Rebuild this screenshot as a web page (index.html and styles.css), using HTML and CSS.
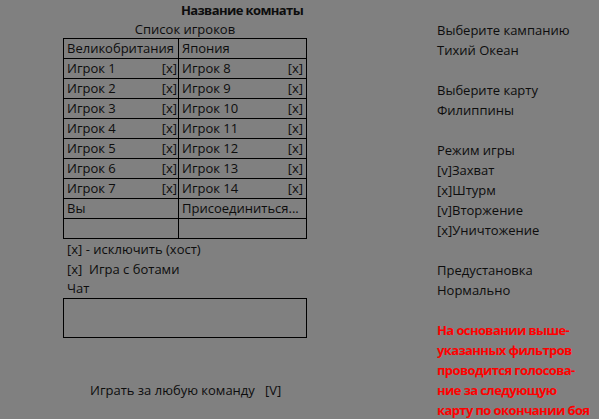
FILE: index.html
```html
<!DOCTYPE html>
<html lang="ru">
<head>
<meta charset="utf-8">
<title>Название комнаты</title>
<link rel="stylesheet" href="styles.css">
</head>
<body>
<div class="title">Название комнаты</div>
<div class="sheet">
  <div class="left">
    <div class="caption">Список игроков</div>
    <table class="players">
      <colgroup><col class="c1"><col class="c2"></colgroup>
      <tr><td>Великобритания</td><td>Япония</td></tr>
      <tr><td><span>Игрок 1</span><span>[x]</span></td><td><span>Игрок 8</span><span>[x]</span></td></tr>
      <tr><td><span>Игрок 2</span><span>[x]</span></td><td><span>Игрок 9</span><span>[x]</span></td></tr>
      <tr><td><span>Игрок 3</span><span>[x]</span></td><td><span>Игрок 10</span><span>[x]</span></td></tr>
      <tr><td><span>Игрок 4</span><span>[x]</span></td><td><span>Игрок 11</span><span>[x]</span></td></tr>
      <tr><td><span>Игрок 5</span><span>[x]</span></td><td><span>Игрок 12</span><span>[x]</span></td></tr>
      <tr><td><span>Игрок 6</span><span>[x]</span></td><td><span>Игрок 13</span><span>[x]</span></td></tr>
      <tr><td><span>Игрок 7</span><span>[x]</span></td><td><span>Игрок 14</span><span>[x]</span></td></tr>
      <tr><td>Вы</td><td>Присоединиться...</td></tr>
      <tr><td></td><td></td></tr>
    </table>
    <div class="note">[x] - исключить (хост)</div>
    <div class="note">[x]&nbsp; Игра с ботами</div>
    <div class="note chat-label">Чат</div>
    <div class="chat"></div>
    <div class="any">Играть за любую команду &nbsp; [V]</div>
  </div>
  <div class="right">
    <div class="line">Выберите кампанию</div>
    <div class="line">Тихий Океан</div>
    <div class="line"></div>
    <div class="line">Выберите карту</div>
    <div class="line">Филиппины</div>
    <div class="line"></div>
    <div class="line">Режим игры</div>
    <div class="line">[v]Захват</div>
    <div class="line">[x]Штурм</div>
    <div class="line">[v]Вторжение</div>
    <div class="line">[x]Уничтожение</div>
    <div class="line"></div>
    <div class="line">Предустановка</div>
    <div class="line">Нормально</div>
    <div class="line"></div>
    <div class="line red">На основании выше-</div>
    <div class="line red">указанных фильтров</div>
    <div class="line red">проводится голосова-</div>
    <div class="line red">ние за следующую</div>
    <div class="line red">карту по окончании боя</div>
  </div>
</div>
</body>
</html>
```
FILE: styles.css
```css
html, body {
  margin: 0;
  padding: 0;
  background: #808080;
  overflow: hidden;
}
body {
  font-family: "Open Sans", "Liberation Sans", sans-serif;
  font-size: 13px;
  color: #0d0d0d;
  width: 599px;
  height: 419px;
}
.title {
  width: 484px;
  height: 20px;
  line-height: 20px;
  text-align: center;
  font-weight: bold;
  letter-spacing: -0.6px;
}
.sheet {
  display: flex;
}
.left {
  margin-left: 63px;
  width: 244px;
}
.caption {
  height: 18px;
  line-height: 18px;
  text-align: center;
}
.players {
  border-collapse: collapse;
  width: 244px;
  table-layout: fixed;
}
.players .c1 { width: 115px; }
.players .c2 { width: 128px; }
.players td {
  border: 1px solid #000;
  height: 19px;
  padding: 0 3px 0 3px;
  line-height: 19px;
  white-space: nowrap;
  overflow: hidden;
}
.players td span:last-child:not(:first-child) {
  float: right;
}
.players td:first-child {
  padding-right: 1px;
}
.note {
  height: 20px;
  line-height: 20px;
  padding-left: 4px;
}
.note.chat-label {
  height: 19px;
  line-height: 19px;
}
.chat {
  height: 38px;
  border: 1px solid #000;
}
.any {
  margin-top: 42px;
  line-height: 20px;
  padding-left: 27px;
}
.right {
  margin-left: 130px;
}
.line {
  height: 20px;
  line-height: 20px;
  white-space: nowrap;
}
.red {
  color: #ff0000;
  font-weight: bold;
  letter-spacing: -0.6px;
}
```
